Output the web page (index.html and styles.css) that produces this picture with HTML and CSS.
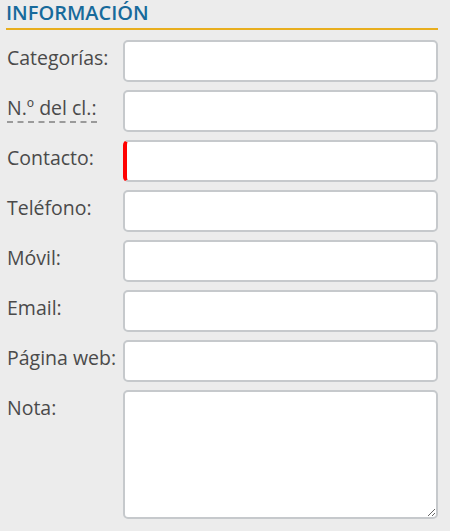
FILE: index.html
```html
<!DOCTYPE html>
<html lang="es">
<head>
<meta charset="utf-8">
<link rel="stylesheet" href="styles.css">
</head>
<body>
<div class="panel">
  <h2 class="title">INFORMACIÓN</h2>
  <div class="form">
    <label class="lbl">Categorías:</label>
    <input class="field" type="text">
    <label class="lbl"><span class="abbr">N.º del cl.:</span></label>
    <input class="field" type="text">
    <label class="lbl">Contacto:</label>
    <input class="field required" type="text">
    <label class="lbl">Teléfono:</label>
    <input class="field" type="text">
    <label class="lbl">Móvil:</label>
    <input class="field" type="text">
    <label class="lbl">Email:</label>
    <input class="field" type="text">
    <label class="lbl">Página web:</label>
    <input class="field" type="text">
    <label class="lbl">Nota:</label>
    <textarea class="field note"></textarea>
  </div>
</div>
</body>
</html>
```
FILE: styles.css
```css
html, body {
  margin: 0;
  padding: 0;
  background: #ececec;
}
body {
  font-family: "Open Sans", "Liberation Sans", sans-serif;
  color: #444;
}
.panel {
  width: 432px;
  padding: 1px 0 0 6px;
}
.title {
  margin: 0;
  font-size: 20px;
  font-weight: 600;
  line-height: 24px;
  color: #176a9b;
  border-bottom: 2px solid #e8ae1e;
  padding-bottom: 3px;
}
.form {
  display: grid;
  grid-template-columns: 117px 1fr;
  row-gap: 8px;
  margin-top: 10px;
}
.lbl {
  font-size: 19.5px;
  line-height: 27px;
  padding: 4px 0 0 1px;
  color: #4a4a4a;
  white-space: nowrap;
}
.abbr {
  border-bottom: 2px dashed #9a9a9a;
  padding-bottom: 0;
}
.field {
  box-sizing: border-box;
  height: 42px;
  width: 315px;
  margin: 0;
  border: 2px solid #c6c9cc;
  border-radius: 5px;
  background: #fff;
  font-family: inherit;
  font-size: 15px;
  outline: none;
}
.required {
  border-left: 4px solid #ff0000;
}
.note {
  height: 129px;
  resize: both;
}
```
